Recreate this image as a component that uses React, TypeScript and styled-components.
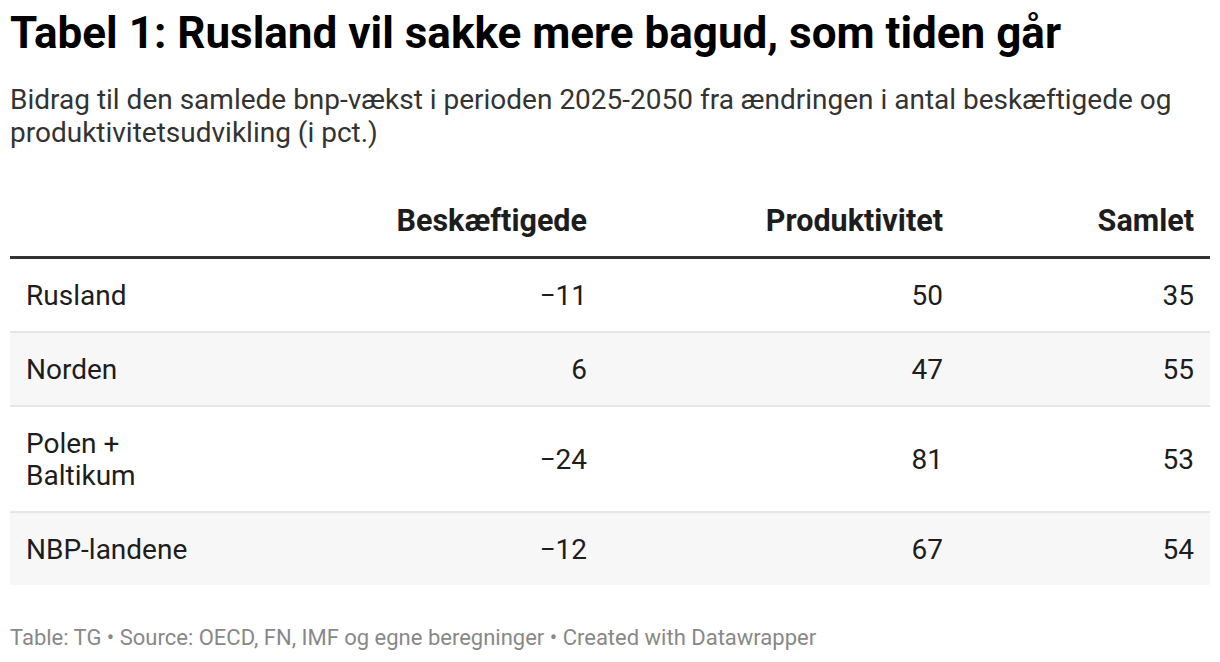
import React from "react";
import styled, { createGlobalStyle } from "styled-components";

const GlobalStyle = createGlobalStyle`
	html, body {
		margin: 0;
		padding: 0;
		background: #ffffff;
	}
	body {
		font-family: Roboto, "Liberation Sans", sans-serif;
		color: #1d1d1d;
	}
`;

interface Row {
	name: string;
	employed: string;
	productivity: string;
	total: string;
}

const rows: Row[] = [
	{ name: "Rusland", employed: "−11", productivity: "50", total: "35" },
	{ name: "Norden", employed: "6", productivity: "47", total: "55" },
	{ name: "Polen + Baltikum", employed: "−24", productivity: "81", total: "53" },
	{ name: "NBP-landene", employed: "−12", productivity: "67", total: "54" },
];

const Chart = styled.div`
	padding: 7px 10px 0 10px;
`;

const Title = styled.h1`
	margin: 0;
	font-size: 44px;
	line-height: 52px;
	font-weight: 700;
	color: #000000;
`;

const Description = styled.p`
	margin: 24px 0 0 0;
	font-size: 28px;
	line-height: 33px;
	color: #333333;
`;

const Table = styled.table`
	width: 100%;
	margin-top: 51px;
	border-collapse: collapse;
	table-layout: fixed;
	font-size: 28px;
`;

const HeadCell = styled.th<{ $align?: "left" | "right" }>`
	text-align: ${({ $align }) => $align ?? "right"};
	font-size: 30.5px;
	font-weight: 700;
	padding: 5px 16px 19px 16px;
	border-bottom: 3px solid #333333;
	line-height: 32px;
`;

const BodyRow = styled.tr<{ $striped: boolean }>`
	background: ${({ $striped }) => ($striped ? "#f7f7f7" : "#ffffff")};
	border-bottom: 2px solid #e6e6e6;

	&:last-child {
		border-bottom: none;
	}
`;

const Cell = styled.td<{ $align?: "left" | "right" }>`
	text-align: ${({ $align }) => $align ?? "right"};
	padding: 21px 16px 19px 16px;
	line-height: 32px;
	vertical-align: middle;
`;

const Footer = styled.div`
	margin-top: 40px;
	font-size: 22px;
	line-height: 26px;
	color: #888888;
`;

export default function App() {
	return (
		<Chart>
			<GlobalStyle />
			<Title>Tabel 1: Rusland vil sakke mere bagud, som tiden går</Title>
			<Description>
				Bidrag til den samlede bnp-vækst i perioden 2025-2050 fra ændringen i antal
				beskæftigede og produktivitetsudvikling (i pct.)
			</Description>
			<Table>
				<colgroup>
					<col style={{ width: 200 }} />
					<col style={{ width: 393 }} />
					<col style={{ width: 356 }} />
					<col />
				</colgroup>
				<thead>
					<tr>
						<HeadCell $align="left"></HeadCell>
						<HeadCell>Beskæftigede</HeadCell>
						<HeadCell>Produktivitet</HeadCell>
						<HeadCell>Samlet</HeadCell>
					</tr>
				</thead>
				<tbody>
					{rows.map((row, i) => (
						<BodyRow key={row.name} $striped={i % 2 === 1}>
							<Cell $align="left">{row.name}</Cell>
							<Cell>{row.employed}</Cell>
							<Cell>{row.productivity}</Cell>
							<Cell>{row.total}</Cell>
						</BodyRow>
					))}
				</tbody>
			</Table>
			<Footer>
				Table: TG • Source: OECD, FN, IMF og egne beregninger • Created with Datawrapper
			</Footer>
		</Chart>
	);
}
